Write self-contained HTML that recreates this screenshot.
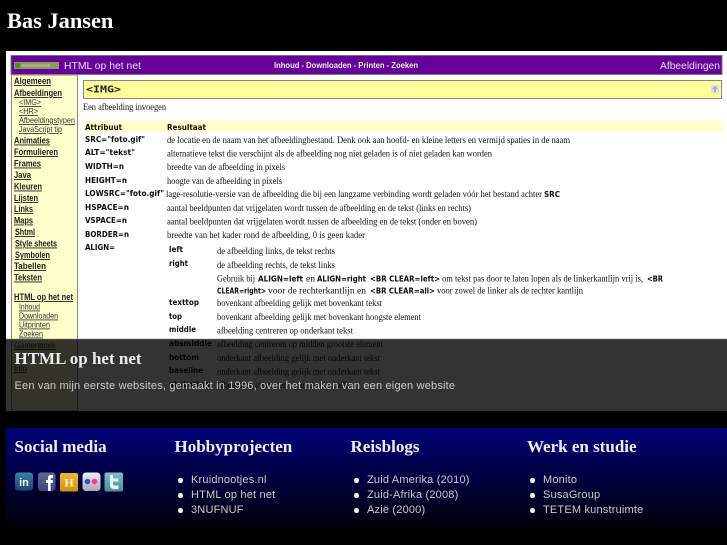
<!DOCTYPE html>
<html><head><meta charset="utf-8"><style>
html,body{margin:0;padding:0;background:#000;width:727px;height:545px;overflow:hidden}
body{position:relative;font-family:"Liberation Sans",sans-serif}
#w{position:absolute;left:0;top:0;width:727px;height:545px;filter:blur(.35px)}
.a{position:absolute;white-space:nowrap}
h1,h2,h3{margin:0;font-family:"Liberation Serif",serif;font-weight:bold;color:#fff}
.s{font-family:"Liberation Sans",sans-serif;font-size:8.5px;fill:#333;text-decoration:underline}
.b{font-family:"Liberation Sans",sans-serif;font-size:9px;font-weight:bold;fill:#222;text-decoration:underline}
.t{font-family:"Liberation Serif",serif;font-size:9px;fill:#111}
.c{font-family:"DejaVu Sans",sans-serif;font-size:8px;font-weight:bold;fill:#111}
.f{position:absolute;top:436px;font:bold 17px/21px "Liberation Serif",serif;color:#eee;white-space:nowrap}
ul{position:absolute;top:473px;margin:0;padding:0;list-style:none;color:#ccc;font-size:11px;line-height:15.2px;letter-spacing:.19px;white-space:nowrap}
li{position:relative;padding-left:16px}
li:before{content:"";position:absolute;left:3px;top:5px;width:4.500px;height:4.500px;border-radius:50%;background:#eee}
</style></head><body><div id="w">
<h1 class="a" style="left:7px;top:8px;font-size:22.400px;line-height:26px">Bas Jansen</h1>

<svg class="a" style="left:6px;top:51px" width="721" height="360" viewBox="6 51 721 360">
<defs><filter id="bl" x="0" y="0" width="100%" height="100%"><feGaussianBlur stdDeviation="0.3"/></filter></defs>
<g filter="url(#bl)">
<rect x="6" y="51" width="721" height="360" fill="#fff"/>
<rect x="11" y="55.500" width="711" height="19" fill="#660099" stroke="#777"/>
<rect x="14" y="62" width="45" height="7" fill="#8a9a60"/>
<rect x="15" y="63" width="5" height="5" fill="#5c8a20"/>
<rect x="22" y="64.500" width="28" height="2" fill="#b4bf94"/>
<text x="64" y="69" font-family="Liberation Sans" font-size="10.500" fill="#e8e0f0" textLength="77" lengthAdjust="spacingAndGlyphs">HTML op het net</text>
<text x="274" y="68" font-family="Liberation Sans" font-size="8" font-weight="bold" fill="#eee" textLength="144" lengthAdjust="spacingAndGlyphs">Inhoud - Downloaden - Printen - Zoeken</text>
<text x="660" y="69" font-family="Liberation Sans" font-size="10.500" fill="#e8e0f0" textLength="60" lengthAdjust="spacingAndGlyphs">Afbeeldingen</text>
<rect x="11.500" y="75" width="66" height="336" fill="#ffffcc" stroke="#888"/>
<rect x="83.500" y="80.500" width="638" height="18" fill="#ffff99" stroke="#888"/>
<text x="86" y="92.500" font-family="DejaVu Sans Mono" font-weight="bold" font-size="10" fill="#222" textLength="35" lengthAdjust="spacingAndGlyphs">&lt;IMG&gt;</text>
<rect x="711" y="85" width="8" height="8" fill="#dde"/><path d="M715 86l3 3h-2v3h-2v-3h-2z" fill="#aab"/>
<text class="t" x="83" y="110" textLength="83" lengthAdjust="spacingAndGlyphs">Een afbeelding invoegen</text>
<rect x="83" y="121" width="639" height="11" fill="#ffffcc"/>

<g>
<text class="b" x="14" y="84" textLength="37" lengthAdjust="spacingAndGlyphs">Algemeen</text>
<text class="b" x="14" y="96" textLength="48" lengthAdjust="spacingAndGlyphs">Afbeeldingen</text>
<text class="s" x="19" y="105" textLength="22" lengthAdjust="spacingAndGlyphs">&lt;IMG&gt;</text>
<text class="s" x="19" y="114" textLength="19" lengthAdjust="spacingAndGlyphs">&lt;HR&gt;</text>
<text class="s" x="19" y="123" textLength="56" lengthAdjust="spacingAndGlyphs">Afbeeldingstypen</text>
<text class="s" x="19" y="132" textLength="43" lengthAdjust="spacingAndGlyphs">JavaScript tip</text>
<text class="b" x="14" y="143.500" textLength="36" lengthAdjust="spacingAndGlyphs">Animaties</text>
<text class="b" x="14" y="155" textLength="44" lengthAdjust="spacingAndGlyphs">Formulieren</text>
<text class="b" x="14" y="166.500" textLength="27" lengthAdjust="spacingAndGlyphs">Frames</text>
<text class="b" x="14" y="178" textLength="17" lengthAdjust="spacingAndGlyphs">Java</text>
<text class="b" x="14" y="189.500" textLength="28" lengthAdjust="spacingAndGlyphs">Kleuren</text>
<text class="b" x="14" y="201" textLength="24" lengthAdjust="spacingAndGlyphs">Lijsten</text>
<text class="b" x="14" y="212" textLength="19" lengthAdjust="spacingAndGlyphs">Links</text>
<text class="b" x="14" y="223.500" textLength="19" lengthAdjust="spacingAndGlyphs">Maps</text>
<text class="b" x="15" y="235" textLength="20" lengthAdjust="spacingAndGlyphs">Shtml</text>
<text class="b" x="15" y="246.500" textLength="42" lengthAdjust="spacingAndGlyphs">Style sheets</text>
<text class="b" x="15" y="258" textLength="35" lengthAdjust="spacingAndGlyphs">Symbolen</text>
<text class="b" x="14" y="269" textLength="32" lengthAdjust="spacingAndGlyphs">Tabellen</text>
<text class="b" x="14" y="280.500" textLength="28" lengthAdjust="spacingAndGlyphs">Teksten</text>
<text class="b" x="14" y="300" textLength="59" lengthAdjust="spacingAndGlyphs">HTML op het net</text>
<text class="s" x="19" y="309.500" textLength="21" lengthAdjust="spacingAndGlyphs">Inhoud</text>
<text class="s" x="19" y="318.500" textLength="39" lengthAdjust="spacingAndGlyphs">Downloaden</text>
<text class="s" x="19" y="327.500" textLength="31" lengthAdjust="spacingAndGlyphs">Uitprinten</text>
<text class="s" x="19" y="336.500" textLength="24" lengthAdjust="spacingAndGlyphs">Zoeken</text>
<text class="s" x="14" y="348" textLength="42" lengthAdjust="spacingAndGlyphs">Gastenboek</text>
<text class="s" x="14" y="371" textLength="13" lengthAdjust="spacingAndGlyphs">Info</text>
</g>

<g>
<text class="c" x="85" y="130" textLength="37" lengthAdjust="spacingAndGlyphs">Attribuut</text>
<text class="c" x="167" y="130" textLength="39" lengthAdjust="spacingAndGlyphs">Resultaat</text>
<text class="c" x="85" y="142" textLength="60" lengthAdjust="spacingAndGlyphs">SRC="foto.gif"</text>
<text class="c" x="85" y="155" textLength="50" lengthAdjust="spacingAndGlyphs">ALT="tekst"</text>
<text class="c" x="85" y="169" textLength="39" lengthAdjust="spacingAndGlyphs">WIDTH=n</text>
<text class="c" x="85" y="183" textLength="42" lengthAdjust="spacingAndGlyphs">HEIGHT=n</text>
<text class="c" x="85" y="196" textLength="79" lengthAdjust="spacingAndGlyphs">LOWSRC="foto.gif"</text>
<text class="c" x="85" y="210" textLength="44" lengthAdjust="spacingAndGlyphs">HSPACE=n</text>
<text class="c" x="85" y="223" textLength="42" lengthAdjust="spacingAndGlyphs">VSPACE=n</text>
<text class="c" x="85" y="237" textLength="44" lengthAdjust="spacingAndGlyphs">BORDER=n</text>
<text class="c" x="85" y="250" textLength="30" lengthAdjust="spacingAndGlyphs">ALIGN=</text>
<text class="c" x="169" y="252" textLength="14" lengthAdjust="spacingAndGlyphs">left</text>
<text class="c" x="169" y="266" textLength="19" lengthAdjust="spacingAndGlyphs">right</text>
<text class="c" x="169" y="305" textLength="30" lengthAdjust="spacingAndGlyphs">texttop</text>
<text class="c" x="169" y="319" textLength="13" lengthAdjust="spacingAndGlyphs">top</text>
<text class="c" x="169" y="332" textLength="27" lengthAdjust="spacingAndGlyphs">middle</text>
<text class="c" x="169" y="346" textLength="43" lengthAdjust="spacingAndGlyphs">absmiddle</text>
<text class="c" x="169" y="360" textLength="30" lengthAdjust="spacingAndGlyphs">bottom</text>
<text class="c" x="169" y="373" textLength="34" lengthAdjust="spacingAndGlyphs">baseline</text>
<text class="c" x="169" y="387" textLength="43" lengthAdjust="spacingAndGlyphs">absbottom</text>
</g>

<g>
<text class="t" x="167" y="143" textLength="403" lengthAdjust="spacingAndGlyphs">de locatie en de naam van het afbeeldingbestand. Denk ook aan hoofd- en kleine letters en vermijd spaties in de naam</text>
<text class="t" x="167" y="156.500" textLength="325" lengthAdjust="spacingAndGlyphs">alternatieve tekst die verschijnt als de afbeelding nog niet geladen is of niet geladen kan worden</text>
<text class="t" x="167" y="170" textLength="118" lengthAdjust="spacingAndGlyphs">breedte van de afbeelding in pixels</text>
<text class="t" x="167" y="184" textLength="115" lengthAdjust="spacingAndGlyphs">hoogte van de afbeelding in pixels</text>
<text class="t" x="166" y="197" textLength="376" lengthAdjust="spacingAndGlyphs">lage-resolutie-versie van de afbeelding die bij een langzame verbinding wordt geladen vóór het bestand achter</text>
<text class="c" x="544" y="197" textLength="16" lengthAdjust="spacingAndGlyphs">SRC</text>
<text class="t" x="167" y="211" textLength="304" lengthAdjust="spacingAndGlyphs">aantal beeldpunten dat vrijgelaten wordt tussen de afbeelding en de tekst (links en rechts)</text>
<text class="t" x="167" y="224.500" textLength="310" lengthAdjust="spacingAndGlyphs">aantal beeldpunten dat vrijgelaten wordt tussen de afbeelding en de tekst (onder en boven)</text>
<text class="t" x="167" y="238" textLength="198" lengthAdjust="spacingAndGlyphs">breedte van het kader rond de afbeelding, 0 is geen kader</text>
<text class="t" x="217" y="254" textLength="118" lengthAdjust="spacingAndGlyphs">de afbeelding links, de tekst rechts</text>
<text class="t" x="217" y="268" textLength="118" lengthAdjust="spacingAndGlyphs">de afbeelding rechts, de tekst links</text>
<text class="t" x="217" y="281.500" textLength="38" lengthAdjust="spacingAndGlyphs">Gebruik bij</text>
<text class="c" x="258" y="281.500" textLength="45" lengthAdjust="spacingAndGlyphs">ALIGN=left</text>
<text class="t" x="306" y="281.500" textLength="9" lengthAdjust="spacingAndGlyphs">en</text>
<text class="c" x="317" y="281.500" textLength="49" lengthAdjust="spacingAndGlyphs">ALIGN=right</text>
<text class="c" x="370" y="281.500" textLength="70" lengthAdjust="spacingAndGlyphs">&lt;BR CLEAR=left&gt;</text>
<text class="t" x="442" y="281.500" textLength="201" lengthAdjust="spacingAndGlyphs">om tekst pas door te laten lopen als de linkerkantlijn vrij is,</text>
<text class="c" x="647" y="281.500" textLength="16" lengthAdjust="spacingAndGlyphs">&lt;BR</text>
<text class="c" x="217" y="293.500" textLength="49" lengthAdjust="spacingAndGlyphs">CLEAR=right&gt;</text>
<text class="t" x="268" y="293.500" textLength="98" lengthAdjust="spacingAndGlyphs">voor de rechterkantlijn en</text>
<text class="c" x="370" y="293.500" textLength="65" lengthAdjust="spacingAndGlyphs">&lt;BR CLEAR=all&gt;</text>
<text class="t" x="437" y="293.500" textLength="146" lengthAdjust="spacingAndGlyphs">voor zowel de linker als de rechter kantlijn</text>
<text class="t" x="217" y="306" textLength="165" lengthAdjust="spacingAndGlyphs">bovenkant afbeelding gelijk met bovenkant tekst</text>
<text class="t" x="217" y="320" textLength="204" lengthAdjust="spacingAndGlyphs">bovenkant afbeelding gelijk met bovenkant hoogste element</text>
<text class="t" x="217" y="333.500" textLength="136" lengthAdjust="spacingAndGlyphs">afbeelding centreren op onderkant tekst</text>
<text class="t" x="217" y="347" textLength="166" lengthAdjust="spacingAndGlyphs">afbeelding centreren op midden grootste element</text>
<text class="t" x="217" y="361" textLength="163" lengthAdjust="spacingAndGlyphs">onderkant afbeelding gelijk met onderkant tekst</text>
<text class="t" x="217" y="374.500" textLength="163" lengthAdjust="spacingAndGlyphs">onderkant afbeelding gelijk met onderkant tekst</text>
<text class="t" x="217" y="388" textLength="136" lengthAdjust="spacingAndGlyphs">afbeelding centreren op onderkant tekst</text>
</g>
</g>
<rect x="6" y="339" width="721" height="72" fill="#000" fill-opacity=".8"/>
<rect x="6" y="338.500" width="721" height="1" fill="#888" fill-opacity=".5"/>
</svg>

<h2 class="a" style="left:14.500px;top:348px;font-size:17px;line-height:21px;color:#eee">HTML op het net</h2>
<div class="a" style="left:14.500px;top:379px;font-size:11px;line-height:14px;letter-spacing:.19px;color:#ccc">Een van mijn eerste websites, gemaakt in 1996, over het maken van een eigen website</div>

<div class="a" style="left:6px;top:428px;width:721px;height:117px;background:linear-gradient(#000078,#000 92%)"></div>

<h3 class="f" style="left:14.500px">Social media</h3>
<h3 class="f" style="left:174.500px">Hobbyprojecten</h3>
<h3 class="f" style="left:350.500px">Reisblogs</h3>
<h3 class="f" style="left:527px">Werk en studie</h3>

<svg class="a" style="left:14px;top:471px" width="112" height="22" viewBox="14 471 112 22">
<defs>
<linearGradient id="g1" x1="0" y1="0" x2="0" y2="1"><stop offset="0" stop-color="#3a80a8"/><stop offset="1" stop-color="#1c4468"/></linearGradient>
<linearGradient id="g2" x1="0" y1="0" x2="0" y2="1"><stop offset="0" stop-color="#626a9c"/><stop offset="1" stop-color="#3c4474"/></linearGradient>
<linearGradient id="g3" x1="0" y1="0" x2="0" y2="1"><stop offset="0" stop-color="#f0b838"/><stop offset="1" stop-color="#d09018"/></linearGradient>
<linearGradient id="g4" x1="0" y1="0" x2="0" y2="1"><stop offset="0" stop-color="#f0f0f4"/><stop offset="1" stop-color="#a8a8b0"/></linearGradient>
<linearGradient id="g5" x1="0" y1="0" x2="0" y2="1"><stop offset="0" stop-color="#80c0c8"/><stop offset="1" stop-color="#4c8c9c"/></linearGradient>
</defs>
<rect x="15" y="472.500" width="18" height="18" rx="3" fill="url(#g1)"/>
<text x="24" y="486" text-anchor="middle" font-family="Liberation Sans" font-weight="bold" font-size="11" fill="#fff">in</text>
<rect x="38" y="472.500" width="17.500" height="18.500" rx="3" fill="url(#g2)"/>
<path d="M48 491v-8h-2v-3h2v-2c0-2 1.500-3 3-3h2v3h-1.500c-.5 0-.8.300-.8 1v1h2.300l-.4 3h-1.900v8z" fill="#fff"/>
<rect x="60" y="473" width="18" height="18.500" rx="2" fill="url(#g3)"/>
<text x="69" y="486.500" text-anchor="middle" font-family="Liberation Serif" font-weight="bold" font-size="12" fill="#fff3c8">H</text>
<rect x="82.500" y="472.500" width="18" height="18.500" rx="3.500" fill="url(#g4)"/>
<circle cx="87.500" cy="481.500" r="2.800" fill="#3050c0"/><circle cx="94.500" cy="481.500" r="2.800" fill="#f03898"/>
<rect x="104.500" y="472.500" width="18.500" height="19" rx="2" fill="url(#g5)"/>
<path d="M110 475h3v3.500h5.500v3h-5.500v2.500c0 1.200.8 1.500 1.800 1.500h3.700v3.500h-4.500c-2.800 0-4-1.700-4-4z" fill="#e8f4f4"/>
</svg>

<ul style="left:175px"><li>Kruidnootjes.nl</li><li>HTML op het net</li><li>3NUFNUF</li></ul>
<ul style="left:351px"><li>Zuid Amerika (2010)</li><li>Zuid-Afrika (2008)</li><li>Azië (2000)</li></ul>
<ul style="left:527px"><li>Monito</li><li>SusaGroup</li><li>TETEM kunstruimte</li></ul>
</div></body></html>
